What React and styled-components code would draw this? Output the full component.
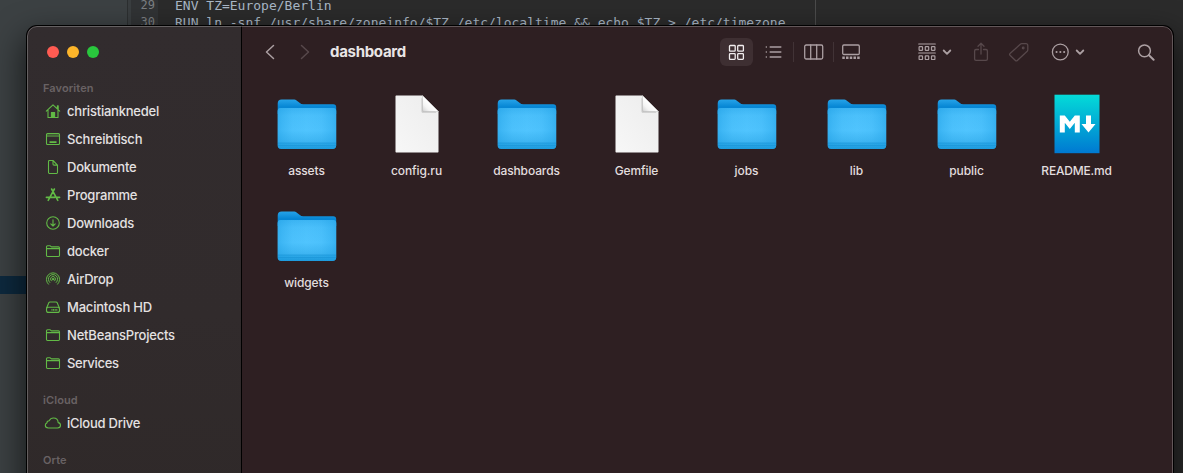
import React from 'react';
import styled, { createGlobalStyle } from 'styled-components';

const Global = createGlobalStyle`
  * { box-sizing: border-box; }
  html, body { margin: 0; padding: 0; overflow: hidden; background: #2b2b2b; }
`;

const Desktop = styled.div`
  position: relative;
  width: 1183px;
  height: 473px;
  overflow: hidden;
  display: flex;
  background: #2b2b2b;
`;

const ProjectPane = styled.div`
  width: 128px;
  padding-top: 276px;
  background: #3c4143;
  border-right: 1px solid #2c2f30;
`;

const SelectedRow = styled.div`
  height: 18px;
  background: #0d293e;
`;

const Gutter = styled.div`
  width: 30px;
  padding-right: 3px;
  text-align: right;
  background: #313335;
  color: #7c7f82;
  border-left: 3px solid #3a3e40;
  font: 12px/17px 'DejaVu Sans Mono', monospace;
  margin-top: -3px;
`;

const Code = styled.pre`
  width: 658px;
  margin: -3px 0 0;
  padding-left: 17px;
  color: #a9b7c6;
  border-right: 1px solid #4b4b4b;
  font: 13px/17px 'DejaVu Sans Mono', monospace;
`;

const Window = styled.section`
  position: absolute;
  left: 27px;
  top: 26px;
  width: 1146px;
  height: 480px;
  display: flex;
  border-radius: 10px;
  overflow: hidden;
  background: #2e1f22;
  font-family: Inter, 'Liberation Sans', sans-serif;
  box-shadow: 0 0 0 1px #000, 0 14px 32px 4px rgba(0, 0, 0, 0.6);
  &::after {
    content: '';
    position: absolute;
    inset: 0;
    border: 1px solid rgba(255, 255, 255, 0.25);
    border-radius: 10px;
    pointer-events: none;
  }
`;

const Sidebar = styled.nav`
  width: 215px;
  flex: none;
  padding: 20px 0 0 16px;
  background: linear-gradient(#322c2e, #312b2c 60%, #2f2929);
  border-right: 1px solid #000;
`;

const Lights = styled.div`
  display: flex;
  gap: 8px;
  padding-left: 4px;
  margin-bottom: 22px;
`;

const Light = styled.span`
  width: 12px;
  height: 12px;
  border-radius: 50%;
  background: ${(p) => p.$color};
`;

const Heading = styled.h2`
  margin: ${(p) => p.$top || 0}px 0 0;
  height: 17px;
  font-size: 11px;
  line-height: 16px;
  font-weight: 600;
  letter-spacing: 0.1px;
  color: #696264;
`;

const Place = styled.div`
  height: 28px;
  display: flex;
  align-items: center;
  gap: 6px;
  color: #e4e1e2;
  font-size: 13px;
  font-weight: 500;
  letter-spacing: ${(p) => p.$spacing}px;
  white-space: nowrap;
`;

const PlaceIcon = styled.svg`
  width: 18px;
  height: 18px;
  margin-left: 1px;
  margin-right: -1px;
  flex: none;
  fill: none;
  stroke: #62ba46;
  stroke-width: 1.1;
  stroke-linecap: round;
  stroke-linejoin: round;
`;

const Main = styled.main`
  flex: 1;
  display: flex;
  flex-direction: column;
`;

const Toolbar = styled.header`
  height: 52px;
  display: flex;
  align-items: center;
  padding: 0 0 0 20px;
`;

const Title = styled.h1`
  width: 404px;
  flex: none;
  margin: 0;
  padding-left: 16px;
  font-size: 15px;
  line-height: 20px;
  font-weight: 700;
  letter-spacing: -0.3px;
  color: #e9e5e6;
`;

const Tool = styled.button`
  width: ${(p) => p.$w}px;
  height: 28px;
  flex: none;
  margin-left: ${(p) => p.$ml || 0}px;
  padding: 0;
  border: 0;
  border-radius: 6px;
  display: flex;
  align-items: center;
  justify-content: center;
  background: ${(p) => (p.$active ? '#3e2f32' : 'transparent')};
  color: ${(p) => (p.$active ? '#f1edee' : p.$dim ? '#57484b' : '#ab9fa2')};
  svg {
    display: block;
    flex: none;
    fill: none;
    stroke: currentColor;
    stroke-linecap: round;
    stroke-linejoin: round;
  }
`;

const Divider = styled.i`
  width: 1px;
  height: 20px;
  flex: none;
  background: #413336;
`;

const Files = styled.div`
  display: grid;
  grid-template-columns: repeat(8, 110px);
  grid-auto-rows: 112px;
  padding: 12px 0 0 10px;
`;

const File = styled.figure`
  margin: 0;
  display: flex;
  flex-direction: column;
  align-items: center;
  svg { display: block; }
`;

const FileName = styled.figcaption`
  margin-top: 9px;
  padding-right: 1px;
  font-size: 12px;
  line-height: 16px;
  font-weight: 500;
  letter-spacing: ${(p) => p.$spacing}px;
  color: #e2dddf;
`;

const icons = {
  home: <><path d="M2.3 9.2 9 2.8l6.7 6.4M13.4 6.8V3.8h.8v4M4 8v7.5h10V8" /><path d="M7.4 15.3V10.6h3.2v4.7z" fill="#62ba46" /></>,
  desktop: <><rect x="2.5" y="3.5" width="13" height="11" rx="1" /><path d="M3 5h12M3 6.2h12" strokeOpacity=".65" /><path d="M5.5 12.2h7" strokeWidth="1.8" strokeLinecap="butt" /></>,
  doc: <path d="M4.5 3.4c0-.5.3-.9.9-.9H9l4.5 4.6v7.5c0 .6-.3.9-.9.9H5.4c-.6 0-.9-.3-.9-.9zM9 2.7V6c0 .8.3 1.1 1.1 1.1h3.2" />,
  apps: <path d="M7.6 3 13.8 14.3M10.4 3 4.2 14.3M2.4 11.4h8.2M13 11.4h2.6" strokeWidth="1.6" />,
  down: <><circle cx="9" cy="9" r="6.3" /><path d="M9 5.8v6M6.8 9.8 9 12l2.2-2.2" /></>,
  folder: <path d="M2.5 6.6h13M2.5 13.6V4.8c0-.7.3-1 1-1h2.7l1.2 1.1h7c.8 0 1.1.4 1.1 1.1v7.6c0 .6-.4.9-1 .9h-11c-.6 0-1-.3-1-.9z" />,
  airdrop: <g strokeWidth="1"><path d="M4.4 14.2A6.6 6.6 0 1 1 13.6 14.2M5.8 12.5a4.6 4.6 0 1 1 6.4 0M7.3 10.9a2.5 2.5 0 1 1 3.4 0" /><circle cx="9" cy="9.2" r=".8" fill="#62ba46" /></g>,
  disk: <><path d="M2.6 10 4.8 4.8c.2-.5.6-.8 1.2-.8h6c.6 0 1 .3 1.2.8L15.4 10" /><rect x="2.5" y="9.2" width="13" height="5.2" rx="2" /><path d="M7.5 11.8h5.8" strokeWidth="1.8" strokeDasharray="1 .6" strokeLinecap="butt" /></>,
  cloud: <path d="M4.4 14h9.1c1.8 0 3-1.2 3-2.7 0-1.4-1-2.5-2.3-2.7C14 6 12 4 9.5 4 7.5 4 6 5.1 5.2 6.8c-1.4 0-2.3.9-2.3 2.2-1 .4-1.6 1.3-1.6 2.3C1.3 12.9 2.6 14 4.4 14z" />,
};

const favorites = [
  ['home', 'christianknedel', -0.22],
  ['desktop', 'Schreibtisch', -0.18],
  ['doc', 'Dokumente', -0.2],
  ['apps', 'Programme', -0.2],
  ['down', 'Downloads', -0.25],
  ['folder', 'docker', -0.2],
  ['airdrop', 'AirDrop', -0.2],
  ['disk', 'Macintosh HD', -0.2],
  ['folder', 'NetBeansProjects', -0.2],
  ['folder', 'Services', -0.3],
];

function PlaceRow({ icon, label, spacing }) {
  return (
    <Place $spacing={spacing}>
      <PlaceIcon viewBox="0 0 18 18">{icons[icon]}</PlaceIcon>
      {label}
    </Place>
  );
}

function FolderArt() {
  const front = 'M2.7 21c0-2 1-3 3-3h52.500c2 0 3 1 3 3v34.500c0 2.200-1.200 3.500-3.500 3.500H6.200c-2.300 0-3.500-1.300-3.500-3.500z';
  return (
    <svg width="64" height="64" viewBox="0 0 64 64">
      <path d="M2.700 13.500c0-2.600 1.300-4 4-4h11.500c1.700 0 2.800.4 4 1.400l2.700 2.200c1 .8 1.700 1.200 3 1.200h30.300c2 0 3 1.200 3 3V24H2.700z" fill="url(#tab)" />
      <path d={front} fill="url(#front)" />
      <path d={front} fill="url(#sides)" />
      <path d="M3 53h58M3 55.500h58" stroke="#168ed2" strokeWidth=".5" />
    </svg>
  );
}

function PageArt() {
  return (
    <svg width="64" height="64" viewBox="0 0 64 64">
      <path d="M10.500 6.500c0-.7.300-1 1-1h26L53.500 21.500v40c0 .7-.3 1-1 1h-41c-.7 0-1-.3-1-1z" fill="url(#paper)" />
      <path d="M36.500 8v13.200c0 1 .6 1.600 1.600 1.600h13.400z" fill="#8c8c8c" opacity=".4" />
      <path d="M37.500 5.500v14.300c0 1.200.5 1.700 1.700 1.700h14.300z" fill="url(#fold)" stroke="#b8b8b8" strokeWidth=".5" />
    </svg>
  );
}

function MarkdownArt() {
  return (
    <svg width="64" height="64" viewBox="0 0 64 64">
      <rect x="9.500" y="4.700" width="45" height="58.500" fill="url(#md)" />
      <path d="M14.800 42.500v-17h5l5 6.300 5-6.300h5v17h-5V32.700l-5 6.200-5-6.200v9.800zM41 25.500h5v8.500h4.500L43.500 42.500 36.500 34H41z" fill="#fff" />
    </svg>
  );
}

const art = { folder: FolderArt, page: PageArt, md: MarkdownArt };

const files = [
  ['folder', 'assets', -0.1], ['page', 'config.ru', -0.1], ['folder', 'dashboards', -0.12], ['page', 'Gemfile', -0.1],
  ['folder', 'jobs', -0.05], ['folder', 'lib', 0], ['folder', 'public', -0.1], ['md', 'README.md', -0.2], ['folder', 'widgets', -0.1],
];

const GradientDefs = styled.svg`
  position: absolute;
`;

function Gradients() {
  return (
    <GradientDefs width="0" height="0">
      <defs>
        <linearGradient id="tab" x1="0" y1="0" x2="0" y2="1"><stop offset="0" stopColor="#26a3e8" /><stop offset=".5" stopColor="#0787d5" /><stop offset="1" stopColor="#0783d0" /></linearGradient>
        <linearGradient id="front" x1="0" y1="0" x2="0" y2="1"><stop offset="0" stopColor="#3db5f3" /><stop offset=".18" stopColor="#4bc0fb" /><stop offset=".55" stopColor="#50c4fe" /><stop offset=".84" stopColor="#3db4f1" /><stop offset=".86" stopColor="#2eaae9" /><stop offset="1" stopColor="#1d9adc" /></linearGradient>
        <linearGradient id="sides" x1="0" y1="0" x2="1" y2="0"><stop offset="0" stopColor="#1c9de3" stopOpacity=".5" /><stop offset=".08" stopColor="#1c9de3" stopOpacity=".32" /><stop offset=".25" stopColor="#1c9de3" stopOpacity=".08" /><stop offset=".5" stopColor="#1c9de3" stopOpacity="0" /><stop offset=".75" stopColor="#1c9de3" stopOpacity=".08" /><stop offset=".92" stopColor="#1c9de3" stopOpacity=".32" /><stop offset="1" stopColor="#1c9de3" stopOpacity=".5" /></linearGradient>
        <linearGradient id="paper" x1="1" y1="0" x2="0" y2="1"><stop offset="0" stopColor="#ececec" /><stop offset="1" stopColor="#f7f7f7" /></linearGradient>
        <linearGradient id="fold" x1="0" y1="1" x2=".5" y2=".5"><stop offset="0" stopColor="#cfcfcf" /><stop offset=".5" stopColor="#f4f4f4" /><stop offset="1" stopColor="#fff" /></linearGradient>
        <linearGradient id="md" x1="0" y1="0" x2="0" y2="1"><stop offset="0" stopColor="#04dbd8" /><stop offset="1" stopColor="#0079d2" /></linearGradient>
      </defs>
    </GradientDefs>
  );
}

const Chevron = () => <svg width="10" height="8" viewBox="0 0 10 8" strokeWidth="1.8"><path d="m1.700 2.500 3.300 3.300 3.300-3.300" /></svg>;

export default function App() {
  return (
    <Desktop>
      <Global />
      <Gradients />
      <ProjectPane><SelectedRow /></ProjectPane>
      <Gutter>29<br />30</Gutter>
      <Code>{'ENV TZ=Europe/Berlin\nRUN ln -snf /usr/share/zoneinfo/$TZ /etc/localtime && echo $TZ > /etc/timezone'}</Code>
      <Window>
        <Sidebar>
          <Lights><Light $color="#ff5b52" /><Light $color="#fdb52a" /><Light $color="#29c73d" /></Lights>
          <Heading>Favoriten</Heading>
          {favorites.map(([icon, label, spacing]) => <PlaceRow key={label} icon={icon} label={label} spacing={spacing} />)}
          <Heading $top={15}>iCloud</Heading>
          <PlaceRow icon="cloud" label="iCloud Drive" spacing={-0.24} />
          <Heading $top={15}>Orte</Heading>
        </Sidebar>
        <Main>
          <Toolbar>
            <Tool $w={16}><svg width="16" height="18" viewBox="0 0 16 18" strokeWidth="1.500"><path d="m11.500 2.500-7 6.500 7 6.500" /></svg></Tool>
            <Tool $w={16} $ml={20} $dim><svg width="16" height="18" viewBox="0 0 16 18" strokeWidth="1.500"><path d="m3.500 2.500 7 6.500-7 6.500" /></svg></Tool>
            <Title>dashboard</Title>
            <Tool $w={33} $ml={2} $active><svg width="17" height="17" viewBox="0 0 17 17" strokeWidth="1.300"><rect x="1.500" y="1.500" width="5.700" height="5.700" rx=".8" /><rect x="9.700" y="1.500" width="5.700" height="5.700" rx=".8" /><rect x="1.500" y="9.700" width="5.700" height="5.700" rx=".8" /><rect x="9.700" y="9.700" width="5.700" height="5.700" rx=".8" /></svg></Tool>
            <Tool $w={40}><svg width="18" height="16" viewBox="0 0 18 16" strokeWidth="1.500"><path d="M6.200 3h10.600M6.200 8h10.600M6.200 13h10.600M2.300 3h.1M2.300 8h.1M2.300 13h.1" /></svg></Tool>
            <Divider />
            <Tool $w={39}><svg width="20" height="16" viewBox="0 0 20 16" strokeWidth="1.300"><rect x=".7" y="1" width="18" height="14" rx="1.500" /><path d="M6.700 1v14M12.700 1v14" /></svg></Tool>
            <Divider />
            <Tool $w={34}><svg width="18" height="16" viewBox="0 0 18 16" strokeWidth="1.300"><rect x=".7" y="1" width="16.600" height="9.500" rx="1.200" /><path d="M.3 13.800h17.400" strokeWidth="2.400" strokeDasharray="2.500 1.220" strokeLinecap="butt" /></svg></Tool>
            <Tool $w={26} $ml={46}>
              <svg width="18" height="18" viewBox="0 0 18 18" strokeWidth="1.200">
                <path d="M.7 1h16.600M.7 10h16.600" />
                <rect x="1.100" y="3.700" width="3.400" height="3.600" rx=".6" /><rect x="7.300" y="3.700" width="3.400" height="3.600" rx=".6" /><rect x="13.500" y="3.700" width="3.400" height="3.600" rx=".6" />
                <rect x="1.100" y="12.900" width="3.400" height="3.600" rx=".6" /><rect x="7.300" y="12.900" width="3.400" height="3.600" rx=".6" /><rect x="13.500" y="12.900" width="3.400" height="3.600" rx=".6" />
              </svg>
            </Tool>
            <Tool $w={12} $ml={1}><Chevron /></Tool>
            <Tool $w={20} $ml={18} $dim><svg width="16" height="20" viewBox="0 0 16 20" strokeWidth="1.300"><path d="M5.500 7.500H3c-.9 0-1.400.5-1.400 1.400v8c0 .9.5 1.400 1.400 1.400h10c.9 0 1.400-.5 1.400-1.400v-8c0-.9-.5-1.400-1.400-1.400h-2.500M8 12V1.500M5 4.300l3-3 3 3" /></svg></Tool>
            <Tool $w={22} $ml={17} $dim><svg width="22" height="20" viewBox="0 0 22 20" strokeWidth="1.300"><path d="M12.300 2.200 2 11.500c-.6.5-.6 1.200 0 1.800l5.400 5.200c.6.6 1.300.6 1.900 0l9.900-9.300c.4-.4.6-.9.6-1.400V3.500c0-1.200-.7-1.800-1.800-1.800h-4.300c-.5 0-1 .2-1.400.5z" /><circle cx="15.200" cy="6" r=".8" /></svg></Tool>
            <Tool $w={20} $ml={20}><svg width="18" height="18" viewBox="0 0 18 18" strokeWidth="1.300"><circle cx="9.300" cy="9" r="7.900" /><path d="M5.500 9h.1M9.300 9h.1M13.100 9h.1" strokeWidth="2" /></svg></Tool>
            <Tool $w={12} $ml={4}><Chevron /></Tool>
            <Tool $w={20} $ml={50}><svg width="18" height="18" viewBox="0 0 18 18" strokeWidth="1.500"><circle cx="7.500" cy="7.800" r="5.900" /><path d="m12 12.300 4.600 4.400" strokeWidth="2" /></svg></Tool>
          </Toolbar>
          <Files>
            {files.map(([kind, name, spacing]) => {
              const Art = art[kind];
              return <File key={name}><Art /><FileName $spacing={spacing}>{name}</FileName></File>;
            })}
          </Files>
        </Main>
      </Window>
    </Desktop>
  );
}
